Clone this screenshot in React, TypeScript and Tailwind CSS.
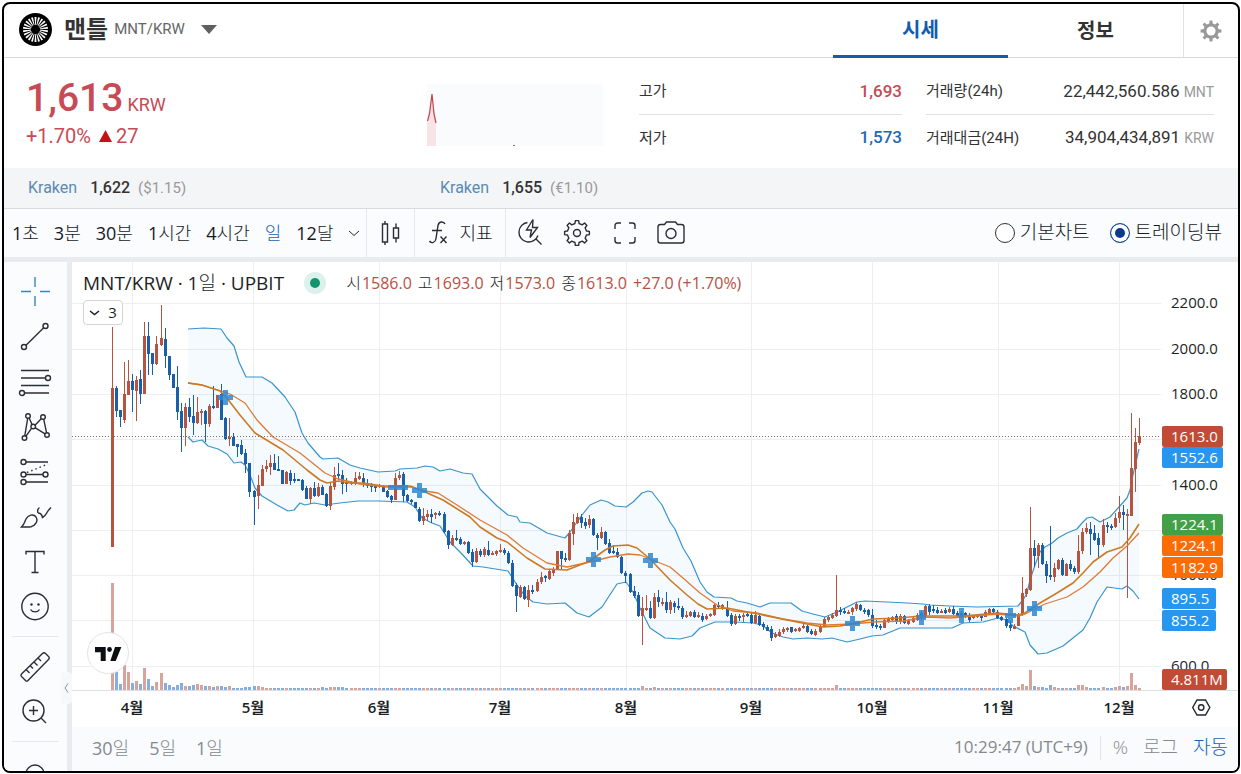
import type { ReactNode } from 'react';

type Candle = [dir: 0 | 1, high: number, top: number, bottom: number, low: number];
type Point = [x: number, y: number];

const UP = '#b6553f';
const DOWN = '#1a5faa';

// one entry per day, 1 = up, 0 = down
const CANDLES: Candle[] = [
  [1, 327, 388, 547, 547], [0, 386, 388, 411, 417], [0, 410, 410, 417, 427], [1, 362, 394, 420, 423],
  [1, 360, 381, 395, 395], [0, 374, 381, 390, 412], [1, 376, 380, 391, 421], [0, 370, 379, 394, 404],
  [1, 322, 336, 394, 394], [0, 322, 336, 354, 375], [0, 353, 353, 364, 375], [1, 336, 344, 364, 365],
  [1, 305, 338, 345, 346], [0, 328, 339, 356, 368], [0, 356, 356, 375, 380], [0, 374, 374, 388, 388],
  [0, 366, 387, 412, 420], [0, 403, 411, 428, 452], [1, 403, 407, 428, 446], [0, 398, 407, 417, 422],
  [0, 395, 416, 423, 435], [1, 397, 412, 423, 424], [1, 409, 411, 413, 425], [0, 410, 411, 424, 442],
  [1, 404, 406, 424, 427], [0, 386, 406, 408, 409], [1, 395, 395, 408, 408], [0, 384, 394, 420, 420],
  [0, 417, 418, 439, 440], [1, 418, 437, 439, 446], [0, 433, 437, 446, 446], [0, 444, 444, 447, 457],
  [0, 440, 445, 454, 455], [0, 449, 453, 464, 473], [0, 463, 463, 492, 497], [0, 490, 491, 497, 525],
  [1, 475, 485, 496, 509], [1, 465, 469, 486, 486], [1, 460, 466, 469, 472], [1, 455, 463, 467, 475],
  [0, 454, 463, 470, 470], [0, 456, 469, 471, 471], [0, 470, 470, 484, 484], [1, 471, 472, 484, 484],
  [0, 470, 473, 481, 485], [0, 473, 479, 481, 483], [0, 479, 479, 481, 481], [0, 479, 480, 490, 491],
  [0, 486, 488, 499, 499], [1, 487, 488, 499, 504], [0, 482, 488, 496, 497], [1, 483, 487, 496, 497],
  [0, 485, 487, 495, 495], [0, 493, 494, 506, 507], [1, 483, 486, 506, 510], [1, 467, 475, 487, 490],
  [0, 463, 474, 476, 480], [0, 470, 475, 484, 494], [0, 478, 482, 484, 492], [1, 481, 482, 484, 485],
  [1, 472, 478, 484, 485], [1, 472, 476, 479, 480], [0, 473, 478, 483, 487], [0, 479, 483, 486, 488],
  [0, 483, 484, 487, 492], [0, 485, 486, 488, 492], [1, 484, 485, 487, 488], [0, 485, 486, 492, 492],
  [0, 490, 491, 497, 498], [0, 495, 496, 500, 503], [1, 473, 478, 500, 500], [1, 471, 475, 478, 480],
  [0, 472, 474, 496, 502], [0, 494, 495, 501, 502], [0, 499, 500, 502, 504], [0, 502, 502, 508, 508],
  [0, 507, 509, 521, 522], [1, 508, 516, 521, 525], [1, 510, 514, 517, 521], [0, 509, 514, 517, 523],
  [1, 512, 513, 515, 519], [0, 511, 513, 515, 516], [0, 512, 514, 532, 533], [0, 530, 531, 545, 549],
  [1, 535, 538, 545, 546], [0, 530, 538, 540, 541], [0, 537, 539, 544, 545], [1, 541, 542, 544, 545],
  [0, 541, 542, 553, 554], [0, 549, 552, 562, 567], [1, 548, 551, 562, 563], [0, 549, 551, 555, 557],
  [1, 547, 549, 555, 557], [0, 541, 550, 555, 556], [1, 551, 553, 555, 555], [1, 550, 551, 554, 556],
  [1, 544, 550, 552, 553], [0, 548, 550, 553, 555], [0, 551, 553, 563, 564], [0, 560, 563, 586, 587],
  [0, 583, 585, 596, 612], [1, 585, 587, 597, 598], [0, 586, 587, 599, 600], [1, 585, 590, 600, 607],
  [0, 585, 590, 592, 594], [1, 579, 582, 591, 592], [1, 572, 577, 582, 584], [0, 575, 576, 578, 582],
  [1, 569, 571, 579, 580], [1, 567, 569, 573, 576], [1, 551, 551, 569, 570], [0, 551, 551, 559, 569],
  [0, 553, 558, 560, 562], [1, 530, 533, 560, 561], [1, 514, 522, 534, 545], [1, 513, 517, 523, 524],
  [0, 514, 517, 523, 528], [0, 518, 522, 526, 529], [1, 515, 519, 525, 528], [0, 518, 519, 535, 536],
  [0, 533, 535, 538, 550], [1, 527, 532, 538, 539], [0, 531, 532, 544, 545], [0, 539, 543, 553, 554],
  [0, 545, 551, 553, 554], [0, 548, 552, 557, 558], [0, 556, 557, 573, 574], [0, 571, 573, 576, 583],
  [0, 573, 574, 592, 593], [0, 586, 591, 596, 598], [0, 592, 595, 616, 617], [1, 597, 608, 616, 645],
  [1, 595, 608, 610, 611], [0, 601, 608, 618, 619], [1, 593, 597, 618, 619], [0, 590, 597, 602, 607],
  [1, 598, 602, 604, 606], [0, 592, 602, 610, 613], [1, 600, 602, 610, 614], [0, 601, 603, 607, 613],
  [0, 598, 606, 608, 610], [0, 606, 608, 617, 619], [1, 611, 615, 617, 618], [1, 611, 612, 616, 617],
  [0, 610, 612, 617, 618], [1, 612, 615, 617, 618], [0, 613, 616, 620, 622], [1, 614, 616, 619, 620],
  [1, 613, 614, 616, 617], [1, 603, 605, 615, 616], [0, 602, 605, 607, 608], [1, 604, 605, 609, 610],
  [0, 601, 608, 616, 617], [0, 613, 615, 624, 626], [1, 614, 616, 624, 625], [0, 614, 616, 618, 621],
  [1, 613, 615, 617, 622], [0, 612, 614, 616, 617], [0, 613, 615, 623, 624], [1, 611, 615, 623, 624],
  [0, 614, 616, 625, 626], [0, 622, 624, 627, 630], [0, 625, 627, 631, 631], [0, 626, 629, 638, 641],
  [1, 632, 634, 637, 638], [1, 629, 632, 636, 637], [1, 627, 629, 632, 634], [1, 627, 628, 630, 632],
  [0, 627, 627, 632, 633], [1, 628, 629, 631, 632], [1, 627, 628, 631, 632], [1, 624, 626, 628, 629],
  [0, 625, 626, 632, 633], [0, 629, 631, 634, 635], [1, 629, 631, 635, 636], [1, 624, 626, 632, 633],
  [1, 617, 619, 627, 627], [1, 615, 617, 620, 622], [1, 613, 615, 618, 619], [1, 575, 610, 616, 617],
  [0, 607, 610, 612, 615], [0, 608, 611, 613, 614], [1, 610, 612, 614, 614], [1, 607, 608, 612, 615],
  [1, 602, 604, 609, 611], [0, 604, 605, 610, 611], [0, 608, 610, 612, 614], [0, 609, 610, 615, 617],
  [0, 609, 615, 626, 628], [0, 620, 625, 627, 629], [0, 624, 626, 628, 630], [1, 618, 620, 628, 628],
  [1, 617, 619, 622, 623], [1, 616, 617, 620, 621], [0, 614, 616, 622, 624], [1, 614, 616, 622, 624],
  [0, 615, 616, 623, 624], [1, 619, 620, 624, 625], [1, 617, 618, 622, 623], [1, 613, 615, 620, 621],
  [0, 611, 613, 618, 620], [1, 605, 606, 616, 617], [0, 604, 606, 612, 615], [0, 605, 609, 611, 613],
  [0, 607, 610, 613, 614], [1, 609, 611, 613, 613], [0, 608, 610, 613, 614], [1, 607, 609, 612, 613],
  [0, 606, 609, 614, 615], [0, 611, 613, 616, 618], [0, 611, 613, 616, 617], [0, 612, 613, 617, 618],
  [0, 613, 615, 620, 622], [1, 615, 616, 618, 619], [1, 615, 616, 617, 618], [0, 615, 616, 618, 621],
  [1, 610, 612, 617, 617], [1, 608, 609, 613, 615], [0, 608, 609, 612, 613], [0, 610, 612, 618, 619],
  [0, 616, 617, 620, 621], [0, 618, 619, 626, 628], [0, 621, 625, 628, 631], [1, 624, 626, 629, 629],
  [1, 613, 614, 626, 626], [1, 577, 593, 615, 616], [1, 588, 589, 594, 597], [1, 507, 548, 590, 591],
  [0, 540, 548, 556, 567], [1, 543, 545, 556, 568], [0, 543, 545, 564, 565], [0, 561, 564, 576, 583],
  [0, 526, 575, 577, 580], [1, 563, 568, 577, 582], [1, 559, 560, 569, 570], [0, 558, 560, 575, 576],
  [1, 563, 564, 576, 576], [0, 560, 564, 569, 571], [0, 566, 568, 572, 574], [1, 535, 551, 572, 574],
  [1, 528, 532, 551, 554], [1, 523, 528, 532, 534], [0, 522, 529, 534, 555], [0, 525, 533, 540, 541],
  [0, 533, 538, 545, 558], [1, 519, 525, 545, 547], [0, 522, 525, 527, 533], [0, 524, 526, 528, 530],
  [1, 513, 518, 527, 528], [1, 496, 512, 518, 523], [0, 505, 512, 515, 530], [1, 509, 514, 516, 598],
  [1, 413, 468, 516, 516], [1, 428, 442, 469, 492], [1, 418, 436, 443, 445],
];

// bar heights of the first weeks, later days are nearly flat
const VOLUMES = [
  107, 18, 6, 25, 18, 7, 9, 6, 22, 11, 4, 8, 17, 7, 5, 3, 5, 7, 4, 4, 5, 6, 5, 4, 4, 3, 4, 4, 3, 4, 2, 2, 2, 3, 3, 4, 4, 3,
];
const VOLUME_PEAKS: Record<number, number> = {
  52: 3, 54: 3, 55: 3, 56: 3, 57: 3, 131: 4, 134: 3, 179: 5, 224: 3, 225: 6, 226: 4, 227: 20, 228: 4, 229: 3,
  230: 3, 232: 5, 233: 3, 239: 5, 240: 5, 241: 3, 245: 3, 248: 3, 249: 4, 250: 3, 251: 4, 252: 17, 253: 5,
};

const UPPER: Point[] = [
  [188, 329], [204, 328], [221, 329], [227, 338], [234, 346], [239, 362], [246, 377], [262, 377], [272, 383],
  [285, 397], [295, 412], [302, 433], [308, 443], [320, 457], [323, 459], [338, 458], [350, 465], [360, 468],
  [378, 472], [395, 471], [400, 469], [417, 468], [425, 466], [433, 467], [440, 471], [450, 469], [463, 473],
  [472, 474], [480, 489], [497, 506], [508, 515], [517, 517], [520, 522], [530, 523], [547, 533], [565, 538],
  [570, 532], [582, 515], [590, 505], [601, 500], [608, 502], [615, 506], [626, 507], [633, 502], [642, 493],
  [648, 491], [652, 492], [662, 505], [670, 522], [675, 529], [683, 548], [691, 561], [700, 582], [707, 592],
  [714, 597], [731, 598], [737, 601], [747, 603], [760, 607], [770, 603], [791, 603], [802, 611], [813, 614],
  [825, 617], [832, 614], [837, 612], [847, 607], [857, 602], [865, 601], [887, 602], [907, 603], [923, 604],
  [930, 605], [950, 606], [977, 607], [1018, 606], [1023, 600], [1027, 593], [1030, 580], [1035, 565],
  [1040, 552], [1045, 547], [1052, 543], [1058, 538], [1067, 533], [1077, 529], [1082, 523], [1087, 518],
  [1092, 517], [1100, 522], [1110, 517], [1119, 507], [1127, 498], [1130, 490], [1133, 475], [1139, 449],
];
const LOWER: Point[] = [
  [188, 437], [193, 442], [202, 440], [208, 446], [218, 449], [227, 454], [234, 463], [241, 462], [245, 465],
  [250, 475], [255, 488], [262, 496], [277, 505], [288, 511], [294, 510], [300, 503], [305, 505], [314, 503],
  [325, 505], [340, 503], [358, 501], [378, 501], [407, 502], [415, 507], [422, 518], [432, 523], [440, 526],
  [450, 542], [460, 552], [473, 566], [483, 567], [508, 571], [517, 585], [525, 596], [533, 602], [547, 604],
  [565, 603], [577, 613], [589, 617], [602, 607], [617, 584], [626, 582], [633, 592], [640, 608], [650, 628],
  [665, 638], [680, 639], [692, 636], [700, 628], [715, 622], [735, 622], [753, 623], [762, 625], [772, 633],
  [783, 637], [793, 639], [807, 638], [822, 639], [832, 638], [847, 642], [860, 639], [872, 636], [883, 635],
  [900, 628], [930, 628], [952, 628], [963, 623], [983, 622], [998, 618], [1007, 620], [1013, 626], [1025, 632],
  [1030, 645], [1038, 654], [1047, 653], [1063, 646], [1073, 638], [1083, 630], [1090, 618], [1097, 602],
  [1107, 587], [1122, 589], [1127, 586], [1133, 591], [1139, 599],
];
const MA_FAST: Point[] = [
  [188, 383], [202, 385], [220, 391], [226, 397], [240, 415], [255, 433], [283, 450], [307, 470], [320, 480],
  [327, 483], [338, 481], [350, 483], [363, 483], [383, 486], [410, 486], [425, 492], [443, 500], [470, 517],
  [480, 527], [497, 538], [507, 542], [527, 558], [545, 569], [567, 570], [590, 561], [605, 550], [613, 546],
  [628, 545], [637, 548], [650, 559], [670, 580], [687, 595], [698, 604], [707, 609], [727, 608], [753, 613],
  [777, 618], [807, 624], [823, 627], [840, 626], [860, 622], [873, 619], [900, 618], [920, 616], [963, 616],
  [997, 613], [1018, 615], [1025, 613], [1040, 603], [1057, 593], [1073, 583], [1083, 573], [1093, 562],
  [1107, 552], [1122, 547], [1130, 538], [1139, 524],
];
const MA_SLOW: Point[] = [
  [188, 383], [202, 385], [221, 391], [230, 394], [245, 403], [257, 420], [273, 437], [300, 453], [325, 473],
  [338, 479], [360, 484], [387, 487], [413, 487], [425, 491], [438, 493], [457, 505], [480, 520], [507, 535],
  [523, 548], [547, 563], [567, 567], [590, 562], [610, 557], [628, 554], [640, 555], [650, 559], [670, 567],
  [683, 578], [700, 593], [717, 605], [733, 611], [757, 613], [783, 619], [807, 623], [827, 625], [853, 624],
  [873, 622], [903, 621], [927, 617], [950, 618], [998, 614], [1018, 616], [1025, 614], [1045, 604],
  [1067, 597], [1083, 587], [1100, 572], [1113, 558], [1127, 546], [1139, 533],
];

const CROSSES: [number, number, number, number][] = [
  [225, 397, 15, 15], [398, 487, 20, 5], [419, 490, 15, 15], [593, 559, 15, 15], [650, 560, 15, 15],
  [852, 623, 15, 15], [921, 617, 9, 15], [961, 615, 5, 15], [1010, 615, 11, 15], [1034, 608, 15, 15],
];

const MONTHS: [string, number][] = [
  ['4월', 132], ['5월', 253], ['6월', 379], ['7월', 500], ['8월', 626], ['9월', 751], ['10월', 872], ['11월', 998], ['12월', 1119],
];
const GRID_ROWS = [303, 349, 394, 439, 485, 530, 575, 620, 666];
const PRICES: [string, number][] = [
  ['2200.0', 303], ['2000.0', 349], ['1800.0', 394], ['1400.0', 485], ['1000.0', 575], ['600.0', 666],
];
const TAGS: [string, number, number, string][] = [
  ['1613.0', 426, 61, '#c14b35'],
  ['1552.6', 447, 61, '#2796f0'],
  ['1224.1', 514, 61, '#43a047'],
  ['1224.1', 535, 61, '#fb6d04'],
  ['1182.9', 557, 61, '#fb6d04'],
  ['895.5', 588, 54, '#2796f0'],
  ['855.2', 610, 54, '#2796f0'],
  ['4.811M', 669, 65, '#c14b35'],
];

const candleX = (i: number) => 112 + Math.round(i * 4.043);
const toPoints = (points: Point[]) => points.map((p) => p.join(',')).join(' ');

function Chart() {
  return (
    <svg
      viewBox="72 262 1166 465"
      role="img"
      aria-label="MNT/KRW"
      className="block h-full w-full font-['Open_Sans','Noto_Sans_CJK_KR',sans-serif]"
    >
      <g stroke="#eceef0" shapeRendering="crispEdges">
        {GRID_ROWS.map((y) => (
          <line key={y} x1={72} x2={1161} y1={y + 0.5} y2={y + 0.5} />
        ))}
        {MONTHS.map(([label, x]) => (
          <line key={label} x1={x + 0.5} x2={x + 0.5} y1={262} y2={690} />
        ))}
      </g>
      <line x1={72} x2={1238} y1={690.5} y2={690.5} stroke="#dcdfe3" shapeRendering="crispEdges" />

      <polygon points={toPoints([...UPPER, ...[...LOWER].reverse()])} fill="#2196f3" fillOpacity={0.05} />
      <g shapeRendering="crispEdges">
        {CANDLES.map((c, i) => {
          const h = VOLUME_PEAKS[i] ?? VOLUMES[i] ?? 2;
          return (
            <rect key={i} x={candleX(i) - 1} y={690 - h} width={3} height={h} fill={c[0] ? '#d6a49b' : '#86aede'} />
          );
        })}
      </g>

      <g fill="none" strokeLinejoin="round">
        <polyline points={toPoints(UPPER)} stroke="#3a94cb" strokeWidth={1.2} />
        <polyline points={toPoints(LOWER)} stroke="#3a94cb" strokeWidth={1.2} />
      </g>
      <g shapeRendering="crispEdges">
        {CANDLES.map(([dir, high, top, bottom, low], i) => (
          <g key={i} fill={dir ? UP : DOWN}>
            <rect x={candleX(i)} y={high} width={1} height={low - high} />
            <rect x={candleX(i) - 1} y={top} width={3} height={bottom - top} />
          </g>
        ))}
      </g>
      <g fill="none" strokeLinejoin="round">
        <polyline points={toPoints(MA_SLOW)} stroke="#e07a35" strokeWidth={1.3} />
        <polyline points={toPoints(MA_FAST)} stroke="#cc7a22" strokeWidth={1.6} />
      </g>
      <g fill="#2f86d0" fillOpacity={0.85} shapeRendering="crispEdges">
        {CROSSES.map(([x, y, w, h]) => (
          <path
            key={x}
            d={`M${x - w / 2} ${y - 2.5}H${x - 2.5}V${y - h / 2}H${x + 2.5}V${y - 2.5}H${x + w / 2}V${y + 2.5}H${x + 2.5}V${y + h / 2}H${x - 2.5}V${y + 2.5}H${x - w / 2}Z`}
          />
        ))}
      </g>
      <line
        x1={72}
        x2={1161}
        y1={436.5}
        y2={436.5}
        stroke="#8a6a66"
        strokeDasharray="1 2"
        shapeRendering="crispEdges"
      />

      <g fontSize={15} fill="#1c1f26">
        {PRICES.map(([label, y]) => (
          <text key={label} x={1171} y={y + 5}>
            {label}
          </text>
        ))}
      </g>
      {TAGS.map(([label, y, w, color]) => (
        <g key={y}>
          <rect x={1162} y={y} width={w} height={21} rx={2} fill={color} />
          <text x={1171} y={y + 16} fontSize={15} fontWeight={500} fill="#fff">
            {label}
          </text>
        </g>
      ))}
      <g fontSize={15} fontWeight={600} fill="#1c1f26" textAnchor="middle">
        {MONTHS.map(([label, x]) => (
          <text key={label} x={x} y={713}>
            {label}
          </text>
        ))}
      </g>
      <g fill="none" stroke="#24272e" strokeWidth={1.4}>
        <path d="M1197 700h8.500l4.300 7.500-4.300 7.500h-8.500l-4.300-7.500z" />
        <circle cx={1201.200} cy={707.500} r={2.700} />
      </g>

      <circle cx={108} cy={653} r={20.500} fill="#fff" stroke="#e3e4e6" />
      <g fill="#0d0f13">
        <path d="M95 647h10.700v14h-5v-8.700H95z" />
        <circle cx={109.500} cy={649.500} r={2.400} />
        <path d="M115 647h6.400l-5.700 14h-5.400z" />
      </g>
    </svg>
  );
}

function Icon({ size = 34, children }: { size?: number; children: ReactNode }) {
  return (
    <svg
      width={size}
      height={size}
      viewBox="0 0 34 34"
      fill="none"
      stroke="#2a2e36"
      strokeWidth={1.400}
      aria-hidden="true"
      className="block shrink-0"
    >
      {children}
    </svg>
  );
}

// cog outline drawn around the centre of a 34px icon
function cogPath(teeth: number, outer: number, inner: number) {
  const step = (Math.PI * 2) / teeth;
  const at = (r: number, a: number) => `${(17 + r * Math.sin(a)).toFixed(2)} ${(17 - r * Math.cos(a)).toFixed(2)}`;
  const parts: string[] = [];
  for (let i = 0; i < teeth; i++) {
    const a = i * step;
    parts.push(at(outer, a - step * 0.17), at(outer, a + step * 0.17), at(inner, a + step * 0.27), at(inner, a + step * 0.73));
  }
  return `M${parts.join('L')}Z`;
}

const TOOLS: [string, ReactNode][] = [
  [
    '십자선',
    <path key="a" stroke="#3b83c0" d="M17 2v10M17 21v10M3 16.500h10M22 16.500h10" />,
  ],
  [
    '추세선',
    <g key="a">
      <circle cx="6" cy="27" r="2.500" />
      <circle cx="27.500" cy="6" r="2.500" />
      <path d="M8 25.200 25.700 7.800" />
    </g>,
  ],
  [
    '피보나치',
    <g key="a">
      <path d="M3 5.500h28M3 13h24.500M3 20.500h28M6.500 28H31" />
      <circle cx="30" cy="13" r="2.500" />
      <circle cx="4" cy="28" r="2.500" />
    </g>,
  ],
  [
    '패턴',
    <g key="a">
      <path d="M6.800 25.700 9.700 8.300M11.200 8l2.800 6.500M17 15.200l6.200-6.500M25.700 9.200l2.800 13.500M13.500 18.300 8 26.200M17 17.700l10 6.200" />
      <circle cx="10" cy="6" r="2.300" />
      <circle cx="25" cy="7" r="2.300" />
      <circle cx="15.200" cy="16.500" r="2.300" />
      <circle cx="6.500" cy="28" r="2.300" />
      <circle cx="29" cy="25" r="2.300" />
    </g>,
  ],
  [
    '예측',
    <g key="a">
      <path d="M8 7h22M8 19.500h17M8 27h22" />
      <path strokeDasharray="1.500 3" d="m9 17.500 21-8.500" />
      <circle cx="5.500" cy="7" r="2.500" />
      <circle cx="5.500" cy="19.500" r="2.500" />
      <circle cx="27.500" cy="19.500" r="2.500" />
      <circle cx="5.500" cy="27" r="2.500" />
    </g>,
  ],
  [
    '브러시',
    <path
      key="a"
      d="M3.500 27c3-3 3-5 4.500-8 2-4 7.500-5.500 10-2 2.500 4-.5 8.500-5 9.700-2.500.6-6 .3-9.500.3zM20 13c2 0 4 2 4.500 4.500 2.500-1 3.500-3 4.500-5s1.500-2.500 4-5M20 13c-1-3 0-4.500 1.500-5.500"
    />,
  ],
  [
    '텍스트',
    <path key="a" d="M8 9.500V6.500h18v3M17 6.500v21M13.500 27.500h7" />,
  ],
  [
    '아이콘',
    <g key="a">
      <circle cx="17" cy="16.500" r="13.200" />
      <path d="M12.500 19.500c2 3.200 7 3.200 9 0" />
      <g fill="#2a2e36" stroke="none">
        <circle cx="13.500" cy="14.500" r="1.200" />
        <circle cx="20.500" cy="14.500" r="1.200" />
      </g>
    </g>,
  ],
];

const RULER = (
  <path d="M3.500 24 24.500 3.500c1-1 2-1 3 0l3 3c1 1 1 2 0 3L10 30.500c-1 1-1.500 1-2.500 0l-4-4c-1-1-1-1.500 0-2.500zM8 19.500l3.500 3.500M12 15.500l3 3M16 12l3.500 3.500M20 8l3 3" />
);

// digits keep the regular weight while the hangul after them is light
function Unit({ children }: { children: string }) {
  const digits = children.match(/^\d*/)?.[0] ?? '';
  return (
    <>
      {digits}
      <span className="font-light">{children.slice(digits.length)}</span>
    </>
  );
}

function ToolButton({ label, children }: { label: string; children: ReactNode }) {
  return (
    <button type="button" aria-label={label} className="flex h-[45px] w-full shrink-0 items-center justify-center pr-[2px]">
      <Icon>{children}</Icon>
    </button>
  );
}

function Sidebar() {
  return (
    <aside className="relative flex min-h-0 w-[68px] shrink-0 flex-col border-r-[5px] border-[#e9ebee] bg-[#fafcfe] pt-[7px]">
      {TOOLS.map(([label, icon]) => (
        <ToolButton key={label} label={label}>
          {icon}
        </ToolButton>
      ))}
      <hr className="mx-2 my-[7px] border-[#e6e8eb]" />
      <ToolButton label="측정">{RULER}</ToolButton>
      <ToolButton label="확대">
        <circle cx="15.500" cy="15.500" r="10.500" />
        <path d="M15.500 11v9M11 15.500h9M23 23l5 5" />
      </ToolButton>
      <hr className="mx-2 my-[7px] border-[#e6e8eb]" />
      <ToolButton label="자석">
        <path d="M8 30V19a9 9 0 0 1 18 0V30M13.500 30V20.500a3.500 3.500 0 0 1 7 0V30" />
      </ToolButton>
      <button
        type="button"
        aria-label="접기"
        className="absolute right-[-5px] top-[410px] flex h-8 w-[11px] items-center justify-center rounded-sm bg-[#f6f8fa] text-[#8b9098]"
      >
        <svg width="5" height="10" viewBox="0 0 5 10" fill="none" stroke="currentColor" aria-hidden="true">
          <path d="M4 .5 1 5l3 4.500" />
        </svg>
      </button>
    </aside>
  );
}

function Header() {
  return (
    <header className="flex h-[54px] shrink-0 border-b border-[#d8dadd]">
      <div className="flex flex-1 items-center pl-[15px] pb-[2px]">
        <svg width="33" height="33" viewBox="-16.500 -16.500 33 33" aria-hidden="true">
          <circle r="16.500" fill="#000" />
          <g fill="#fff">
            {Array.from({ length: 22 }, (_, i) => (
              <path key={i} d="M-.3-4.500h.6L1-12.500h-2z" transform={`rotate(${(i * 360) / 22})`} />
            ))}
          </g>
        </svg>
        <h1 className="ml-3 text-2xl font-bold text-[#333]">맨틀</h1>
        <span className="ml-[6px] text-[15px] text-[#666]">MNT/KRW</span>
        <button type="button" aria-label="코인 선택" className="ml-4">
          <svg width="16" height="9" viewBox="0 0 16 9" fill="#5f6062" aria-hidden="true">
            <path d="M0 0h16L8 9z" />
          </svg>
        </button>
      </div>
      <nav className="flex text-xl font-bold">
        <a
          href="#price"
          className="-mb-px flex w-[175px] items-center justify-center border-b-[3px] border-[#115cab] text-[#115cab]"
        >
          시세
        </a>
        <a href="#info" className="flex w-[175px] items-center justify-center text-[#333]">
          정보
        </a>
      </nav>
      <button
        type="button"
        aria-label="설정"
        className="flex w-[55px] items-center justify-center border-l border-[#dfe1e4]"
      >
        <svg width="22" height="22" viewBox="5 5 24 24" fill="none" aria-hidden="true">
          <path d={cogPath(8, 11.500, 8.500)} fill="#999" />
          <circle cx="17" cy="17" r="5" fill="#fff" />
        </svg>
      </button>
    </header>
  );
}

function Stat({ label, value, unit, tone }: { label: string; value: string; unit?: string; tone: string }) {
  return (
    <div className="flex h-[46px] items-center justify-between border-b border-[#dfe1e4] last:border-0">
      <dt className="text-[15px] text-[#333]">{label}</dt>
      <dd className={`text-[17px] ${tone}`}>
        {value}
        {unit && <span className="ml-1 text-sm text-[#999]">{unit}</span>}
      </dd>
    </div>
  );
}

function Summary() {
  return (
    <section className="flex h-[110px] shrink-0 pl-[22px] pr-6">
      <div className="w-[401px] pt-4 text-[#c84a55]">
        <p className="text-[39px] font-medium leading-[48px]">
          1,613<span className="ml-1 text-lg font-normal">KRW</span>
        </p>
        <p className="flex items-center text-xl leading-7">
          +1.70%
          <svg width="13" height="12" viewBox="0 0 13 12" fill="#c70f17" className="ml-2 mr-1" aria-hidden="true">
            <path d="M6.500 0 13 12H0z" />
          </svg>
          27
        </p>
      </div>
      <svg width="176" height="62" viewBox="0 0 176 62" className="mt-[26px] shrink-0" aria-hidden="true">
        <path fill="#fafbfc" d="M0 0h176v62H0z" />
        <path fill="#f8e4e7" d="M0 62V37L5 10l4 28v24z" />
        <path fill="none" stroke="#c4424a" strokeWidth="1.200" d="m.5 37 2-7L5 10l2 20 2 9" />
        <path fill="#777" d="M86 61h2v1h-2z" />
      </svg>
      <div className="ml-9 flex flex-1 gap-6 pt-[11px]">
        <dl className="flex-[263]">
          <Stat label="고가" value="1,693" tone="font-medium text-[#c84a55]" />
          <Stat label="저가" value="1,573" tone="font-medium text-[#2468b5]" />
        </dl>
        <dl className="flex-[288]">
          <Stat label="거래량(24h)" value="22,442,560.586" unit="MNT" tone="text-[#333]" />
          <Stat label="거래대금(24H)" value="34,904,434,891" unit="KRW" tone="text-[#333]" />
        </dl>
      </div>
    </section>
  );
}

function Exchanges() {
  const rows = [
    ['1,622', '($1.15)'],
    ['1,655', '(€1.10)'],
  ];

  return (
    <section className="flex h-[41px] shrink-0 items-center border-b border-[#d8dadd] bg-[#f4f5f7] pl-6">
      {rows.map(([price, foreign]) => (
        <p key={price} className="flex w-[412px] items-baseline text-base">
          <a href="#kraken" className="text-[#5b8ab5]">
            Kraken
          </a>
          <span className="ml-[13px] font-medium text-[#333]">{price}</span>
          <span className="ml-2 text-[15px] text-[#999]">{foreign}</span>
        </p>
      ))}
    </section>
  );
}

function Toolbar() {
  return (
    <div className="flex h-[53px] shrink-0 items-stretch border-b-[5px] border-[#e9ebee] bg-[#fafcfe] font-['Open_Sans','Noto_Sans_CJK_KR',sans-serif] text-lg text-[#16191f]">
      <div className="flex items-center gap-[15px] pl-2 pr-[6px]">
        {['1초', '3분', '30분', '1시간', '4시간', '일', '12달'].map((label) => (
          <button key={label} type="button" className={label === '일' ? 'text-[#1763b6]' : undefined}>
            <Unit>{label}</Unit>
          </button>
        ))}
        <button type="button" aria-label="더보기">
          <svg width="12" height="7" viewBox="0 0 12 7" fill="none" stroke="#24272e" aria-hidden="true">
            <path d="m1 1 5 4.500L11 1" />
          </svg>
        </button>
      </div>
      <button type="button" aria-label="봉 차트" className="flex w-12 items-center justify-center border-l border-[#e6e8eb]">
        <Icon>
          <path d="M8.500 8h5v18h-5zM11 5v3M11 26v3M19.500 12h5v10h-5zM22 7.500V12M22 22v4.500" />
        </Icon>
      </button>
      <button type="button" className="flex w-[92px] items-center border-x border-[#e6e8eb] pl-[6px] font-light">
        <Icon>
          <path d="M21 8c-1-2.500-6-3.500-7 1.500l-2 13c-.5 4-4.500 5.500-6.500 2.500M8 14.500h10M16.500 20.500l6 6.500M22.500 20.500l-6 6.500" transform="translate(3 0)" />
        </Icon>
        <span className="ml-1">지표</span>
      </button>
      <div className="flex items-center gap-3 pl-2">
        <button type="button" aria-label="빠른 검색">
          <Icon>
            <path d="M13.500 6.500a9.800 9.800 0 1 0 10.500 13M22 23l5.500 5.500M19 3.500l-6.500 10.500h5L16 21.500l7.500-10h-5z" />
          </Icon>
        </button>
        <button type="button" aria-label="차트 설정">
          <Icon>
            <path strokeLinejoin="round" d={cogPath(8, 12.500, 9.700)} />
            <circle cx="17" cy="17" r="3.500" />
          </Icon>
        </button>
        <button type="button" aria-label="전체 화면" className="ml-[2px]">
          <Icon>
            <path d="M7 13V9.500A2.500 2.500 0 0 1 9.500 7H13M21 7h3.500A2.500 2.500 0 0 1 27 9.500V13M27 21v3.500a2.500 2.500 0 0 1-2.500 2.500H21M13 27H9.500A2.500 2.500 0 0 1 7 24.500V21" />
          </Icon>
        </button>
        <button type="button" aria-label="스냅샷">
          <Icon>
            <path d="M6.500 8.500h4l2-2.500h9l2 2.500h4a2.500 2.500 0 0 1 2.500 2.500v13.500a2.500 2.500 0 0 1-2.500 2.500h-21A2.500 2.500 0 0 1 4 24.500V11a2.500 2.500 0 0 1 2.500-2.500z" />
            <circle cx="17" cy="17.500" r="5" />
          </Icon>
        </button>
      </div>
      <fieldset className="ml-auto flex items-center gap-5 pr-4 text-[19px] font-light">
        {['기본차트', '트레이딩뷰'].map((label, i) => (
          <label key={label} className="flex items-center gap-[5px]">
            <input
              type="radio"
              name="chart"
              defaultChecked={i === 1}
              className="h-5 w-5 appearance-none rounded-full border border-[#333] bg-white checked:border-[#1f4f93] checked:bg-[#0b3a8c] checked:shadow-[inset_0_0_0_4px_#fff]"
            />
            {label}
          </label>
        ))}
      </fieldset>
    </div>
  );
}

function Legend() {
  const ohlc = [
    ['시', '1586.0'],
    ['고', '1693.0'],
    ['저', '1573.0'],
    ['종', '1613.0'],
  ];

  return (
    <div className="absolute left-[11px] top-[7px] text-[#1c1f26]">
      <div className="flex h-7 items-center whitespace-nowrap">
        <h2 className="text-[19px]">
          MNT/KRW · 1<span className="font-light">일</span> · UPBIT
        </h2>
        <span className="ml-5 flex h-[22px] w-[22px] items-center justify-center rounded-full bg-[#dcf1ec]">
          <span className="h-[10px] w-[10px] rounded-full bg-[#12946f]" />
        </span>
        <p className="ml-5 flex gap-[6px] text-base text-[#b9503f]">
          {ohlc.map(([label, value]) => (
            <span key={label}>
              <span className="mr-px font-light text-[#1c1f26]">{label}</span>
              {value}
            </span>
          ))}
          <span>+27.0 (+1.70%)</span>
        </p>
      </div>
      <button
        type="button"
        className="mt-[3px] flex h-[25px] w-10 items-center justify-center gap-2 rounded border border-[#d3d5d9] bg-white text-[15px]"
      >
        <svg width="11" height="6" viewBox="0 0 11 6" fill="none" stroke="#1c1f26" strokeWidth="1.500" aria-hidden="true">
          <path d="m1 1 4.500 3.500L10 1" />
        </svg>
        3
      </button>
    </div>
  );
}

function BottomBar() {
  return (
    <footer className="flex h-11 shrink-0 items-center bg-[#f9fbfd] pb-[3px] pl-5 pr-[10px] text-lg text-[#85898f]">
      <div className="flex gap-5">
        {['30일', '5일', '1일'].map((label) => (
          <button key={label} type="button">
            <Unit>{label}</Unit>
          </button>
        ))}
      </div>
      <time className="ml-auto text-[17px]">10:29:47 (UTC+9)</time>
      <span className="mx-3 h-6 w-px bg-[#e3e5e8]" />
      <div className="flex gap-[15px] text-[19px] font-light">
        <button type="button">%</button>
        <button type="button">로그</button>
        <button type="button" className="text-[#1763b6]">
          자동
        </button>
      </div>
    </footer>
  );
}

export default function App() {
  return (
    <div className="h-screen bg-white pb-px pl-[2px] pr-px pt-[2px] font-[Roboto,'Noto_Sans_CJK_KR',sans-serif]">
      <div className="flex h-full flex-col overflow-hidden rounded-lg border-2 border-black bg-white">
        <Header />
        <Summary />
        <Exchanges />
        <Toolbar />
        <main className="flex min-h-0 flex-1">
          <Sidebar />
          <div className="flex min-w-0 flex-1 flex-col font-['Open_Sans','Noto_Sans_CJK_KR',sans-serif]">
            <div className="relative min-h-0 flex-1">
              <Chart />
              <Legend />
            </div>
            <BottomBar />
          </div>
        </main>
      </div>
    </div>
  );
}
